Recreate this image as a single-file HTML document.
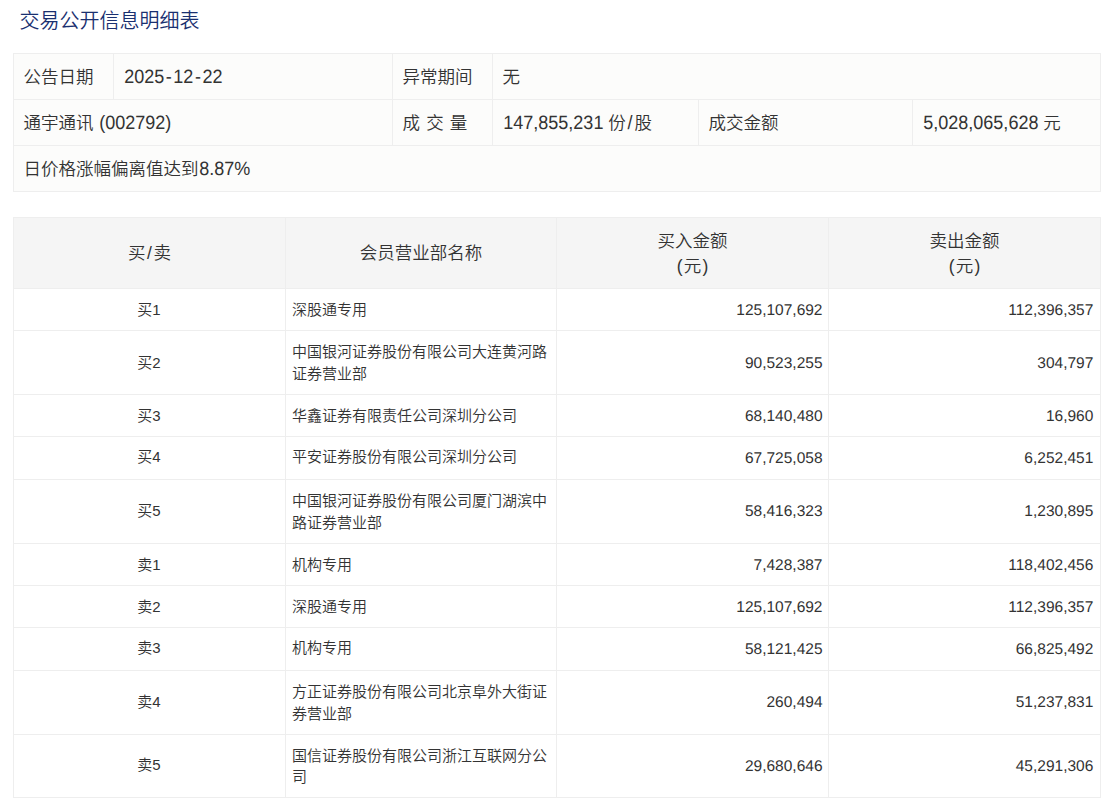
<!DOCTYPE html>
<html lang="zh-CN">
<head>
<meta charset="utf-8">
<title>交易公开信息明细表</title>
<style>
html,body{margin:0;padding:0;background:#fff;}
body{width:1109px;height:809px;overflow:hidden;position:relative;font-family:"Liberation Sans","Noto Sans CJK SC",sans-serif;color:#333;}
h2{position:absolute;left:19.5px;top:6px;margin:0;font-size:20px;line-height:30px;font-weight:350;color:#1a3070;}
table{border-collapse:collapse;position:absolute;left:13px;table-layout:fixed;width:1087px;}
td,th{border:1px solid #eee;font-weight:350;box-sizing:border-box;}
#t1{top:53px;background:#fcfcfb;}
#t1 td{height:46px;padding:2px 10px 0 9.5px;font-size:17.5px;line-height:25px;text-align:left;white-space:nowrap;}
#t1 .n{font-size:18px;position:relative;top:0;margin-left:.8px;}
.n{display:inline-block;text-rendering:geometricPrecision;}
#t1 .n{transform:scaleY(1.07);transform-origin:0 75%;}
#t2 .n{position:relative;top:0.8px;}
#t1 .n i{font-style:normal;padding:0 1.5px;}
#t1 .sl{padding:0 1.8px;margin-left:0;}
#t2{top:217px;}
#t2 th{background:#f5f5f5;font-size:17.5px;line-height:25px;height:71px;padding:1px 10px 0;text-align:center;}
#t2 .hs{padding:0 1.6px;}
#t2 .yp{letter-spacing:1.2px;margin-right:-1.2px;}
#t2 td{font-size:15px;line-height:21.25px;padding:0 7px 0 6px;}
#t2 td.c{text-align:center;}
#t2 td.r{text-align:right;font-size:15.5px;padding-right:5.5px;}
#t2 td.r:last-child{padding-right:6.7px;}
#t2 tr.s td{height:42px;}
#t2 tr.d td{height:64px;}
#t2 tr.t td{height:43px;}
#t2 tr.e td{height:63px;}
#t2 tr.u td.c,#t2 tr.u td.r,#t2 tr.t td{padding-bottom:2px;}
</style>
</head>
<body>
<h2>交易公开信息明细表</h2>
<table id="t1">
<colgroup><col style="width:100px"><col style="width:279px"><col style="width:100px"><col style="width:206px"><col style="width:214px"><col style="width:188px"></colgroup>
<tr><td>公告日期</td><td><span class="n">2025<i>-</i>12<i>-</i>22</span></td><td>异常期间</td><td colspan="3">无</td></tr>
<tr><td colspan="2">通宇通讯 <span class="n">(002792)</span></td><td style="word-spacing:1.3px">成 交 量</td><td><span class="n">147,855,231</span> 份<span class="n sl">/</span>股</td><td>成交金额</td><td><span class="n">5,028,065,628</span> 元</td></tr>
<tr><td colspan="6">日价格涨幅偏离值达到<span class="n">8.87%</span></td></tr>
</table>
<table id="t2">
<colgroup><col style="width:272px"><col style="width:271px"><col style="width:272px"><col style="width:272px"></colgroup>
<tr><th>买<span class="hs">/</span>卖</th><th>会员营业部名称</th><th>买入金额<br><span class="yp">(元)</span></th><th>卖出金额<br><span class="yp">(元)</span></th></tr>
<tr class="s"><td class="c">买1</td><td>深股通专用</td><td class="r"><span class="n">125,107,692</span></td><td class="r"><span class="n">112,396,357</span></td></tr>
<tr class="d"><td class="c">买2</td><td>中国银河证券股份有限公司大连黄河路证券营业部</td><td class="r"><span class="n">90,523,255</span></td><td class="r"><span class="n">304,797</span></td></tr>
<tr class="s"><td class="c">买3</td><td>华鑫证券有限责任公司深圳分公司</td><td class="r"><span class="n">68,140,480</span></td><td class="r"><span class="n">16,960</span></td></tr>
<tr class="t"><td class="c">买4</td><td>平安证券股份有限公司深圳分公司</td><td class="r"><span class="n">67,725,058</span></td><td class="r"><span class="n">6,252,451</span></td></tr>
<tr class="d u"><td class="c">买5</td><td>中国银河证券股份有限公司厦门湖滨中路证券营业部</td><td class="r"><span class="n">58,416,323</span></td><td class="r"><span class="n">1,230,895</span></td></tr>
<tr class="s"><td class="c">卖1</td><td>机构专用</td><td class="r"><span class="n">7,428,387</span></td><td class="r"><span class="n">118,402,456</span></td></tr>
<tr class="s"><td class="c">卖2</td><td>深股通专用</td><td class="r"><span class="n">125,107,692</span></td><td class="r"><span class="n">112,396,357</span></td></tr>
<tr class="t"><td class="c">卖3</td><td>机构专用</td><td class="r"><span class="n">58,121,425</span></td><td class="r"><span class="n">66,825,492</span></td></tr>
<tr class="d u"><td class="c">卖4</td><td>方正证券股份有限公司北京阜外大街证券营业部</td><td class="r"><span class="n">260,494</span></td><td class="r"><span class="n">51,237,831</span></td></tr>
<tr class="e u"><td class="c">卖5</td><td>国信证券股份有限公司浙江互联网分公司</td><td class="r"><span class="n">29,680,646</span></td><td class="r"><span class="n">45,291,306</span></td></tr>
</table>
</body>
</html>
